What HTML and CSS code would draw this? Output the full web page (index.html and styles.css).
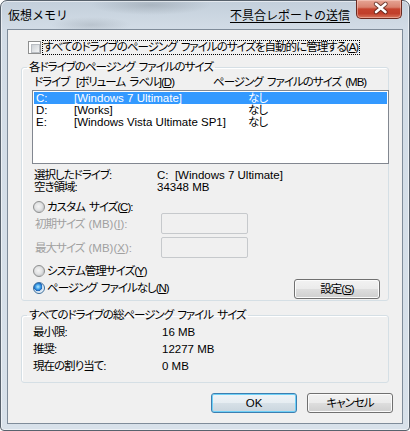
FILE: index.html
```html
<!DOCTYPE html>
<html lang="ja">
<head>
<meta charset="utf-8">
<title>仮想メモリ</title>
<link rel="stylesheet" href="styles.css">
</head>
<body>
<div class="window">
  <div class="titlebar">
    <span class="title">仮想メモリ</span>
    <span class="report">不具合レポートの送信</span>
    <span class="close">
      <svg width="46" height="19" viewBox="0 0 46 19">
        <path d="M20 5 L29.5 13 M29.5 5 L20 13" stroke="#4a1d16" stroke-width="4.4" stroke-linecap="round" fill="none" opacity="0.75"/>
        <path d="M20 5 L29.5 13 M29.5 5 L20 13" stroke="#ffffff" stroke-width="2.6" stroke-linecap="round" fill="none"/>
      </svg>
    </span>
  </div>
  <div class="client">
    <div class="check-row">
      <span class="checkbox"></span>
      <span class="focus">すべてのドライブのページング ファイルのサイズを自動的に管理する(<u>A</u>)</span>
    </div>

    <fieldset class="group group-drives">
      <legend>各ドライブのページング ファイルのサイズ</legend>
      <div class="list-head">
        <span>ドライブ</span>
        <span>[ボリューム ラベル](<u>D</u>)</span>
        <span>ページング ファイルのサイズ (MB)</span>
      </div>
      <div class="listbox">
        <div class="list-row selected"><span>C:</span><span>[Windows 7 Ultimate]</span><span class="ja">なし</span></div>
        <div class="list-row"><span>D:</span><span>[Works]</span><span class="ja">なし</span></div>
        <div class="list-row"><span>E:</span><span>[Windows Vista Ultimate SP1]</span><span class="ja">なし</span></div>
      </div>
      <div class="info">
        <span>選択したドライブ:</span><span class="lat">C:&nbsp;&nbsp;[Windows 7 Ultimate]</span>
        <span>空き領域:</span><span class="lat">34348 MB</span>
      </div>
      <div class="radio-row first">
        <span class="radio"></span><span>カスタム サイズ(<u>C</u>):</span>
      </div>
      <div class="field-row">
        <span class="disabled">初期サイズ <span class="lat">(MB)(<u>I</u>):</span></span><span class="textbox"></span>
      </div>
      <div class="field-row second">
        <span class="disabled">最大サイズ <span class="lat">(MB)(<u>X</u>):</span></span><span class="textbox"></span>
      </div>
      <div class="radio-row system">
        <span class="radio"></span><span>システム管理サイズ(<u>Y</u>)</span>
      </div>
      <div class="last-row">
        <span class="radio-inline"><span class="radio checked"></span><span>ページング ファイルなし(<u>N</u>)</span></span>
        <button class="btn set">設定(<u>S</u>)</button>
      </div>
    </fieldset>

    <fieldset class="group group-total">
      <legend>すべてのドライブの総ページング ファイル サイズ</legend>
      <div class="totals">
        <span>最小限:</span><span class="lat">16 MB</span>
        <span>推奨:</span><span class="lat">12277 MB</span>
        <span>現在の割り当て:</span><span class="lat">0 MB</span>
      </div>
    </fieldset>

    <div class="buttons">
      <button class="btn default">OK</button>
      <button class="btn">キャンセル</button>
    </div>
  </div>
</div>
</body>
</html>
```
FILE: styles.css
```css
* { box-sizing: border-box; }
html, body { margin: 0; padding: 0; }
body {
  width: 410px;
  height: 431px;
  overflow: hidden;
  background: #ffffff;
  font: 11.5px/13px "Liberation Sans", "Noto Sans CJK JP", sans-serif;
  font-feature-settings: "palt";
  letter-spacing: -1px;
  word-spacing: 2px;
  color: #000;
  white-space: nowrap;
}
u { text-decoration: underline; text-underline-offset: 1px; }
.lat { letter-spacing: 0; word-spacing: 0; }

.window {
  width: 410px;
  height: 431px;
  border: 1px solid #58626d;
  border-radius: 7px 7px 4px 4px;
  padding: 0 6px 6px 6px;
  background:
    radial-gradient(ellipse 60px 10px at 150px 4px, rgba(120,130,140,.35), rgba(120,130,140,0)),
    radial-gradient(ellipse 40px 8px at 90px 24px, rgba(120,130,140,.25), rgba(120,130,140,0)),
    linear-gradient(180deg, #c3cfdb 0px, #d2dce6 28px, #d8e1ea 100%);
  box-shadow: inset 0 0 0 1px rgba(255,255,255,.55);
}

.titlebar {
  height: 28px;
  display: flex;
  align-items: flex-start;
  font-size: 12px;
  letter-spacing: 0;
  word-spacing: 0;
  font-feature-settings: normal;
}
.title {
  margin: 8px 0 0 1px;
  line-height: 14px;
}
.report {
  margin: 8px 6px 0 auto;
  line-height: 14px;
  text-decoration: underline;
  text-underline-offset: 2px;
}
.close {
  width: 46px;
  height: 19px;
  margin: -1px 1px 0 0;
  border: 1px solid #6b2a20;
  border-top: 0;
  border-radius: 0 0 5px 5px;
  background: linear-gradient(180deg, #e6a595 0%, #d9826f 40%, #c5432e 50%, #c13f2b 75%, #d8765c 100%);
  box-shadow: inset 0 0 0 1px rgba(255,220,210,.45);
  display: block;
}
.close svg { display: block; margin: -1px 0 0 -1px; }

.client {
  height: 395px;
  border: 1px solid #7f8c9a;
  background: #f0f0f0;
  padding: 11px 0 10px 0;
}

.check-row {
  display: flex;
  align-items: center;
  height: 13px;
  margin-left: 20px;
}
.checkbox {
  width: 13px;
  height: 13px;
  border: 1px solid #8e8f8f;
  background: #fff;
  padding: 2px;
  margin-right: 1px;
  flex: none;
}
.checkbox::after {
  content: "";
  display: block;
  width: 7px;
  height: 7px;
  border: 1px solid #b9bdc2;
  background: linear-gradient(135deg, #cdd1d6, #f3f4f5);
}
.focus {
  padding: 1px 2px 1px 1px;
  line-height: 13px;
  outline: 1px dotted #000;
  outline-offset: -1px;
}

.group {
  margin: 6px 0 0 13px;
  width: 368px;
  min-width: 0;
  border: 1px solid #d5dfe5;
  border-radius: 3px;
  box-shadow: inset 1px 1px 0 #fff;
  padding: 0 8px 1px 10px;
}
.group legend {
  margin-left: -5px;
  padding: 0 2px;
  line-height: 14px;
}

.list-head {
  height: 16px;
  display: grid;
  grid-template-columns: 42px 137px 160px;
  align-items: center;
  padding-left: 2px;
  padding-top: 1px;
}

.listbox {
  width: 357px;
  height: 74px;
  border: 1px solid #828790;
  background: #fff;
  padding: 1px;
  letter-spacing: 0;
  word-spacing: 0;
}
.list-row {
  height: 12px;
  line-height: 12px;
  display: grid;
  grid-template-columns: 38px 174px auto;
  padding-left: 2px;
}
.list-row .ja { letter-spacing: -1px; }
.list-row.selected {
  background: #3399ff;
  color: #fff;
}

.info {
  margin-top: 5px;
  display: grid;
  grid-template-columns: 123px auto;
  grid-auto-rows: 12px;
  line-height: 12px;
  padding-left: 2px;
}

.radio-row {
  display: flex;
  align-items: center;
  height: 12px;
  line-height: 12px;
  padding-left: 1px;
}
.radio-row.first { margin-top: 8px; }
.radio-row.system { margin-top: 7px; }
.radio {
  width: 12px;
  height: 12px;
  border-radius: 50%;
  border: 1px solid #8e8f8f;
  background: radial-gradient(circle at 45% 45%, #f4f4f4 0, #e2e3e4 45%, #c9cbce 70%, #f9f9f9 72%);
  margin-right: 2px;
  flex: none;
}
.radio.checked {
  background:
    radial-gradient(circle at 40% 38%, #b8ecff 0, #3a9be6 30%, #1c5fb4 48%, #c9dcee 52%, #eef3f8 72%);
  border-color: #3b6e9c;
}

.field-row {
  display: grid;
  grid-template-columns: 126px 87px;
  align-items: center;
  height: 21px;
  padding-left: 3px;
}
.field-row.second { margin-top: 3px; }
.disabled { color: #a0a0a0; padding-top: 2px; }
.textbox {
  height: 21px;
  border: 1px solid #c6c9cc;
  border-radius: 2px;
  background: #f0f0f0;
}

.last-row {
  margin-top: 2px;
  height: 20px;
  display: flex;
  align-items: flex-start;
}
.radio-inline {
  display: flex;
  align-items: center;
  height: 12px;
  line-height: 12px;
  margin-top: 3px;
  padding-left: 1px;
}

.btn {
  width: 86px;
  height: 20px;
  padding: 0;
  border: 1px solid #707070;
  border-radius: 3px;
  background: linear-gradient(180deg, #f2f2f2 0%, #ebebeb 48%, #dddddd 52%, #cfcfcf 100%);
  box-shadow: inset 0 0 0 1px #fbfbfb;
  font: inherit;
  font-feature-settings: "palt";
  letter-spacing: -1px;
  line-height: 16px;
  color: #000;
}
.btn.set { margin-left: auto; }
.btn.default {
  letter-spacing: 0;
  border-color: #3c7fb1;
  box-shadow: inset 0 0 0 1px #6fd0f7;
  background: linear-gradient(180deg, #f0f4f7 0%, #e6edf2 48%, #d6e0e7 52%, #c9d5de 100%);
}

.group-total { margin-top: 7px; padding-bottom: 7px; }
.totals {
  padding-top: 2px;
  display: grid;
  grid-template-columns: 129px auto;
  grid-auto-rows: 17px;
  line-height: 17px;
  padding-left: 1px;
}

.buttons {
  margin-top: 10px;
  display: flex;
  justify-content: flex-end;
  gap: 10px;
  padding-right: 9px;
}
```
